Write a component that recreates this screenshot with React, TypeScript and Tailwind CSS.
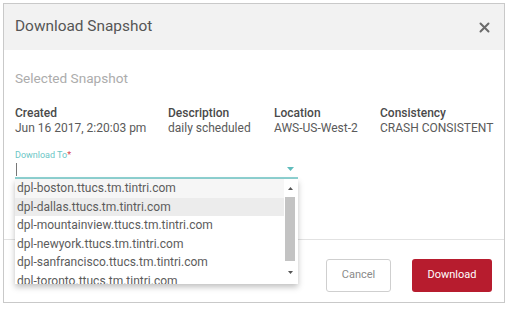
import React from "react";

const hosts = [
  "dpl-boston.ttucs.tm.tintri.com",
  "dpl-dallas.ttucs.tm.tintri.com",
  "dpl-mountainview.ttucs.tm.tintri.com",
  "dpl-newyork.ttucs.tm.tintri.com",
  "dpl-sanfrancisco.ttucs.tm.tintri.com",
  "dpl-toronto.ttucs.tm.tintri.com",
];

const details = [
  { label: "Created", value: "Jun 16 2017, 2:20:03 pm" },
  { label: "Description", value: "daily scheduled" },
  { label: "Location", value: "AWS-US-West-2" },
  { label: "Consistency", value: "CRASH CONSISTENT" },
];

export default function App() {
  return (
    <div
      className="w-[510px] h-[310px] bg-white pl-[3px] pt-[3px]"
      style={{ fontFamily: "Roboto, 'Liberation Sans', sans-serif" }}
    >
      <div className="w-[502px] h-[300px] border border-[#c9c9c9] flex flex-col">
        {/* Header */}
        <div className="h-[46px] bg-[#f2f2f2] flex items-center justify-between pl-[11px] pr-[14px]">
          <span className="text-[15.4px] text-[#555]">Download Snapshot</span>
          <svg width="11" height="11" viewBox="0 0 11 11" className="mt-[1px]">
            <path d="M1.5 1.5 L9.5 9.5 M9.5 1.5 L1.5 9.5" stroke="#6b6b6b" strokeWidth="2" strokeLinecap="round" />
          </svg>
        </div>

        {/* Body */}
        <div className="h-[190px] pt-[20px] pl-[11px] border-b border-[#e2e2e2]">
          <div className="text-[13.6px] leading-[16px] text-[#acacac]">Selected Snapshot</div>
          <div className="grid grid-cols-[153px_106px_106px_auto] mt-[20px] text-[12px] leading-[15px]">
            {details.map((d) => (
              <div key={d.label} className="flex flex-col">
                <span className="text-[#4a4a4a] font-medium">{d.label}</span>
                <span className="text-[#5a5a5a]">{d.value}</span>
              </div>
            ))}
          </div>

          <div className="mt-[13px] text-[9px] leading-[12px] text-[#6cc6c6]">
            Download To<span className="text-[#d9464f]">*</span>
          </div>
          <div className="relative w-[283px]">
            <div className="h-[18px] border-b-2 border-[#8fd3d3] flex items-center justify-between pl-[1px] pr-[4px]">
              <span className="w-px h-[13px] bg-[#777]" />
              <svg width="7" height="4" viewBox="0 0 7 4">
                <path d="M0 0 L7 0 L3.5 4 Z" fill="#5fbcbc" />
              </svg>
            </div>
            {/* Dropdown list */}
            <div className="absolute left-0 top-full w-[283px] h-[105px] bg-white shadow-[0_3px_6px_rgba(0,0,0,0.25)] flex overflow-hidden">
              <div className="flex-1 flex flex-col">
                {hosts.map((h, i) => (
                  <div
                    key={h}
                    className={`h-[18.5px] shrink-0 flex items-center pl-[2px] text-[12px] text-[#5c5c5c] ${
                      i === 0 ? "bg-[#f6f6f6]" : i === 1 ? "bg-[#ececec]" : "bg-white"
                    }`}
                  >
                    {h}
                  </div>
                ))}
              </div>
              <div className="w-[12px] mr-[2px] flex flex-col items-center bg-white">
                <div className="h-[18px] flex items-center justify-center">
                  <svg width="5" height="3" viewBox="0 0 5 3">
                    <path d="M2.5 0 L5 3 L0 3 Z" fill="#555" />
                  </svg>
                </div>
                <div className="w-[10px] h-[64px] bg-[#c3c3c3]" />
                <div className="flex-1 flex items-center justify-center">
                  <svg width="5" height="3" viewBox="0 0 5 3">
                    <path d="M0 0 L5 0 L2.5 3 Z" fill="#555" />
                  </svg>
                </div>
              </div>
            </div>
          </div>
        </div>

        {/* Footer */}
        <div className="flex justify-end gap-[21px] pt-[19px] pr-[12px]">
          <button className="w-[65px] h-[33px] border border-[#cfcfcf] rounded-[3px] bg-white text-[11px] text-[#8a8a8a]">
            Cancel
          </button>
          <button className="w-[80px] h-[33px] rounded-[3px] bg-[#b71c2e] text-[11px] text-white">
            Download
          </button>
        </div>
      </div>
    </div>
  );
}
